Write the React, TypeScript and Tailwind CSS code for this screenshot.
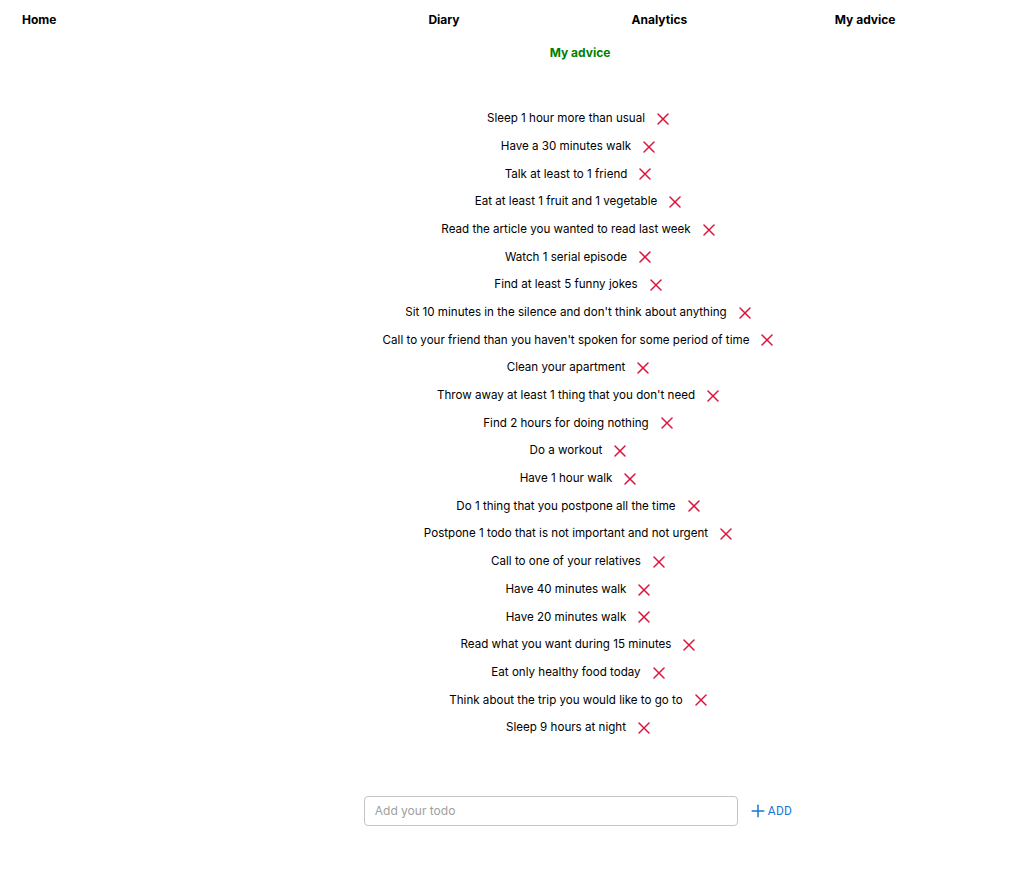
import { Plus, X } from "lucide-react";

const advice = [
  "Sleep 1 hour more than usual",
  "Have a 30 minutes walk",
  "Talk at least to 1 friend",
  "Eat at least 1 fruit and 1 vegetable",
  "Read the article you wanted to read last week",
  "Watch 1 serial episode",
  "Find at least 5 funny jokes",
  "Sit 10 minutes in the silence and don't think about anything",
  "Call to your friend than you haven't spoken for some period of time",
  "Clean your apartment",
  "Throw away at least 1 thing that you don't need",
  "Find 2 hours for doing nothing",
  "Do a workout",
  "Have 1 hour walk",
  "Do 1 thing that you postpone all the time",
  "Postpone 1 todo that is not important and not urgent",
  "Call to one of your relatives",
  "Have 40 minutes walk",
  "Have 20 minutes walk",
  "Read what you want during 15 minutes",
  "Eat only healthy food today",
  "Think about the trip you would like to go to",
  "Sleep 9 hours at night",
];

export default function App() {
  return (
    <div className="min-h-screen bg-white text-black font-['Inter',sans-serif]">
      <nav className="grid grid-cols-5 pt-[12px] text-[12px] font-bold leading-[15px]">
        <a className="pl-[22px]">Home</a>
        <span />
        <a className="pl-[22px]">Diary</a>
        <a className="pl-[22px]">Analytics</a>
        <a className="pl-[22px]">My advice</a>
      </nav>
      <main className="pl-[144px] flex flex-col items-center">
        <h2 className="mt-[18px] text-[12px] font-bold leading-[15px] text-[#008000]">
          My advice
        </h2>
        <ul className="mt-[45px] flex flex-col items-center">
          {advice.map((item, index) => (
            <li
              key={index}
              className="flex items-center h-[27.7px] text-[11.6px]"
            >
              <span>{item}</span>
              <X className="ml-[8px] w-[20px] h-[20px] text-[#dc143c]" strokeWidth={1.8} />
            </li>
          ))}
        </ul>
        <div className="mt-[54px] flex items-center -ml-[4px]">
          <input
            placeholder="Add your todo"
            className="w-[374px] h-[30px] border border-[#c4c4c4] rounded-[4px] px-[10px] text-[12px] placeholder:text-[#a0a0a0] outline-none"
          />
          <button className="ml-[10px] flex items-center text-[12px] text-[#1976d2] font-['Roboto',sans-serif] tracking-[0.3px]">
            <Plus className="w-[20px] h-[20px]" strokeWidth={1.8} />
            ADD
          </button>
        </div>
      </main>
    </div>
  );
}
